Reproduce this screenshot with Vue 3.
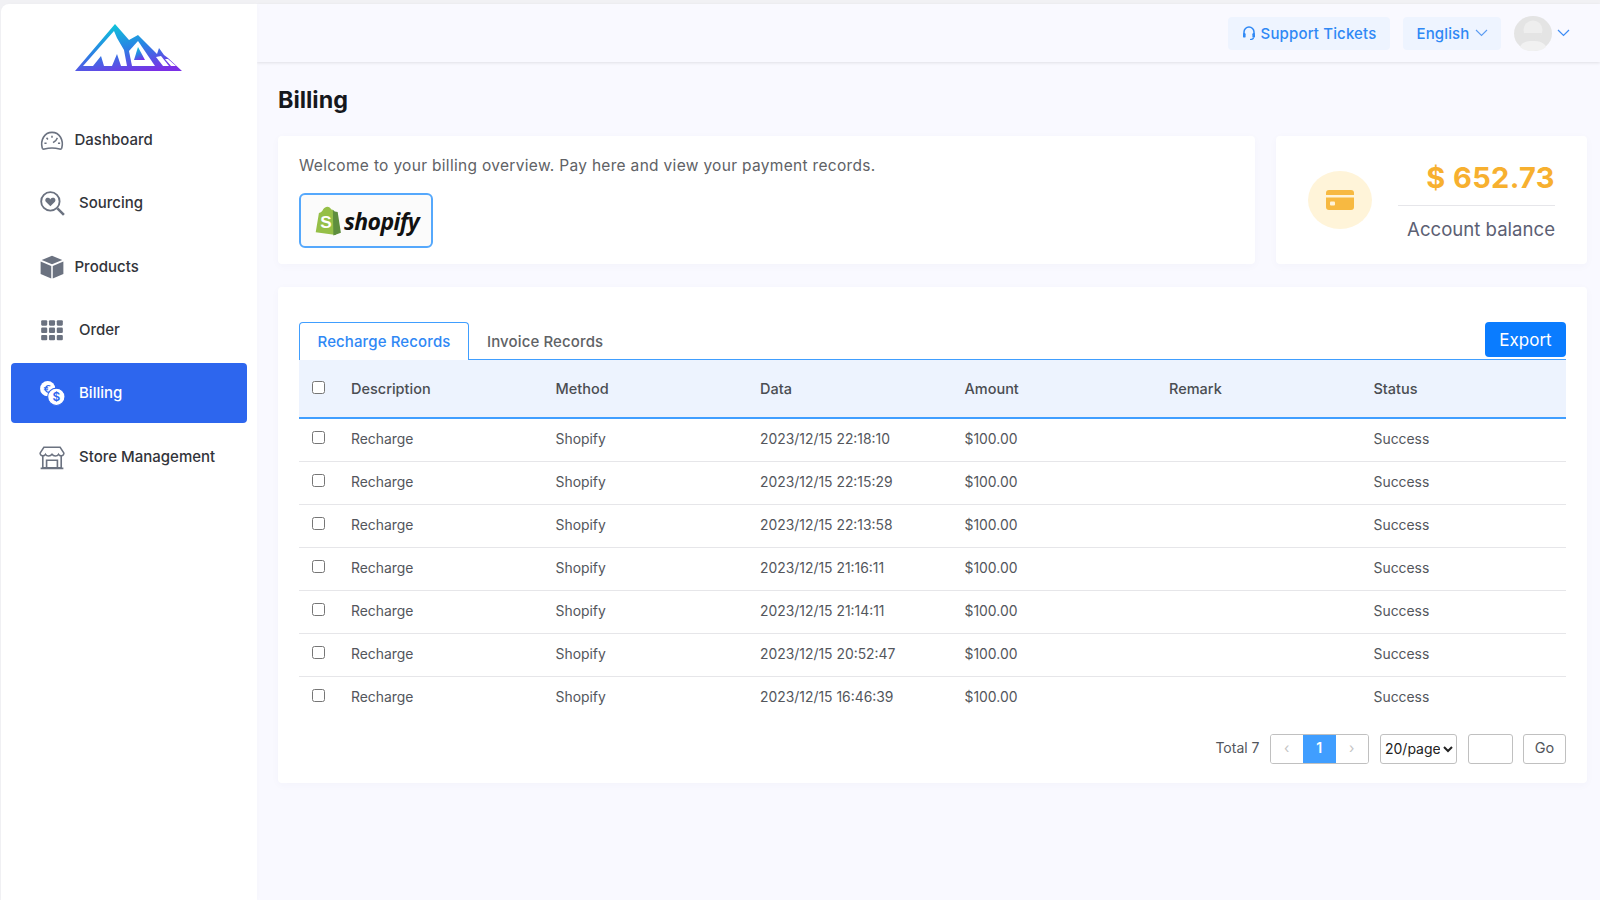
<template>
  <div class="page">
    <aside class="sidebar">
      <div class="logo">
        <svg width="108" height="50" viewBox="0 0 108 50">
          <defs>
            <linearGradient id="lg" x1="0.3" y1="0" x2="0.7" y2="1">
              <stop offset="0" stop-color="#0cc8d8" />
              <stop offset="0.5" stop-color="#2a82e4" />
              <stop offset="1" stop-color="#7a2fe6" />
            </linearGradient>
          </defs>
          <path fill="url(#lg)" d="M40 0 L54 16 L63 11 L82 30 L84 24 L89 31 L93 34 L107 47 L0 47 Z" />
          <path fill="#fff" d="M39 7 L8 42 L18 42 L26 32 L29 42 L37 42 L42 30 L46 42 L52 42 L49 26 L42 14 Z" />
          <path fill="#fff" d="M63 17 L54 27 L57 42 L80 42 Z" />
          <path fill="url(#lg)" d="M63 23 L70 36 L59 36 Z" />
          <path fill="#fff" d="M81 33 L86 32 L94 42 L88 42 Z" />
          <path fill="#fff" d="M90 35 L93 35 L101 42 L96 42 Z" />
        </svg>
      </div>
      <nav class="nav">
        <a v-for="item in menu" :key="item.name" class="nav-item" :class="{ active: item.name === 'Billing', tight: item.tight }">
          <svg class="nav-icon" viewBox="0 0 24 24" v-html="item.icon"></svg>
          <span>{{ item.name }}</span>
        </a>
      </nav>
    </aside>

    <div class="right">
      <header class="topbar">
        <button class="top-btn support">
          <svg width="14" height="15" viewBox="0 0 14 15" fill="none">
            <path d="M2 8V6a5 5 0 0 1 10 0v2" stroke="#2f88f5" stroke-width="1.5" />
            <rect x="1" y="7" width="2.6" height="4.6" rx="1.2" fill="#2f88f5" />
            <rect x="10.4" y="7" width="2.6" height="4.6" rx="1.2" fill="#2f88f5" />
            <path d="M11.5 11.5c0 1.5-1.5 2-3.5 2" stroke="#2f88f5" stroke-width="1.2" />
          </svg>
          Support Tickets
        </button>
        <button class="top-btn lang">
          English
          <svg width="13" height="8" viewBox="0 0 13 8" fill="none"><path d="M1 1l5.5 5.5L12 1" stroke="#5b9cf2" stroke-width="1.1" /></svg>
        </button>
        <div class="avatar">
          <svg width="38" height="35" viewBox="0 0 38 35">
            <ellipse cx="19" cy="17.5" rx="19" ry="17.5" fill="#e4e4e4" />
            <circle cx="19" cy="14" r="9.5" fill="#eeeeee" />
            <path d="M10 17h18c-1 5-5 7-9 7s-8-2-9-7z" fill="#e4e4e4" />
            <path d="M6 31c2-5 7-6 13-6s11 1 13 6c-3 3-8 4-13 4s-10-1-13-4z" fill="#f1f1f1" />
          </svg>
        </div>
        <svg class="avatar-caret" width="13" height="8" viewBox="0 0 13 8" fill="none"><path d="M1 1l5.5 5.5L12 1" stroke="#3d8cf5" stroke-width="1.2" /></svg>
      </header>

      <main class="main">
        <h1 class="title">Billing</h1>

        <div class="summary">
          <section class="card welcome">
            <p>Welcome to your billing overview. Pay here and view your payment records.</p>
            <button class="shopify-btn">
              <svg width="29" height="30" viewBox="0 0 26 28">
                <path d="M2 24.5 L5 6.5 C7 6 8 5 9 3 C10.5 0.5 13.5 0 15 1.5 L17 3.5 L18 3.5 L21 27 Z" fill="#95bf47" />
                <path d="M18 3.5 L19.8 5.2 L22.5 5.5 L25.5 25 L18.5 27.5 Z" fill="#5e8e3e" />
                <text x="11.5" y="20.5" text-anchor="middle" class="bag-s">S</text>
              </svg>
              <span class="shopify-word">shopify</span>
            </button>
          </section>
          <section class="card balance">
            <div class="balance-icon">
              <svg width="28" height="20" viewBox="0 0 28 20">
                <path d="M3 0h22a3 3 0 0 1 3 3v2H0V3a3 3 0 0 1 3-3z" fill="#f7b941" />
                <path d="M0 7.5h28V17a3 3 0 0 1-3 3H3a3 3 0 0 1-3-3z" fill="#f7b941" />
                <rect x="4" y="11.5" width="5" height="4" rx="1" fill="#fff3d9" />
              </svg>
            </div>
            <div class="balance-text">
              <div class="amount">$ 652.73</div>
              <div class="balance-label">Account balance</div>
            </div>
          </section>
        </div>

        <section class="card records">
          <div class="tabs">
            <button class="tab active">Recharge Records</button>
            <button class="tab">Invoice Records</button>
            <button class="export">Export</button>
          </div>

          <table class="table">
            <thead>
              <tr>
                <th class="check"><input type="checkbox" /></th>
                <th v-for="c in columns" :key="c">{{ c }}</th>
              </tr>
            </thead>
            <tbody>
              <tr v-for="r in rows" :key="r">
                <td class="check"><input type="checkbox" /></td>
                <td>Recharge</td>
                <td>Shopify</td>
                <td>{{ r }}</td>
                <td>$100.00</td>
                <td></td>
                <td>Success</td>
              </tr>
            </tbody>
          </table>

          <div class="pager">
            <span class="total">Total 7</span>
            <div class="pages">
              <button class="page-btn">‹</button>
              <button class="page-btn current">1</button>
              <button class="page-btn">›</button>
            </div>
            <select class="size">
              <option>20/page</option>
            </select>
            <input class="jump" type="text" />
            <button class="go">Go</button>
          </div>
        </section>
      </main>
    </div>
  </div>
</template>

<script setup>
const menu = [
  {
    name: 'Dashboard',
    tight: true,
    icon: '<path d="M3 19.5C1 12 5 5 12 5s11 7 9 14.5c-.3 1-1 1-2 .8-4-1-10-1-14 0-1 .2-1.7.2-2-.8z" fill="none" stroke="#6b7280" stroke-width="1.5"/><path d="M12 8v2M7 10l1.2 1.5M17 10l-1.5 2.5-2.5 2M5 15h2M17.5 15h2" stroke="#6b7280" stroke-width="1.4" fill="none"/>'
  },
  {
    name: 'Sourcing',
    icon: '<circle cx="10.5" cy="10.5" r="8.5" fill="none" stroke="#6b7280" stroke-width="1.7"/><path d="M17 17l6 6" stroke="#6b7280" stroke-width="2.4"/><path d="M10.5 15L6.3 10.8C5 9 6.5 6.8 8.5 7.2c1 .2 1.6.8 2 1.5.4-.7 1-1.3 2-1.5 2-.4 3.5 1.8 2.2 3.6z" fill="#6b7280"/>'
  },
  {
    name: 'Products',
    tight: true,
    icon: '<path d="M12 1.5L2.5 5.5l9.5 4 9.5-4z" fill="#6b7280"/><path d="M1.5 7l9.8 4v11.5L1.5 18.5z" fill="#6b7280"/><path d="M22.5 7l-9.8 4v11.5l9.8-4z" fill="#6b7280"/>'
  },
  {
    name: 'Order',
    icon: '<g fill="#6b7280"><rect x="2" y="3" width="5.6" height="5" rx="1"/><rect x="9.2" y="3" width="5.6" height="5" rx="1"/><rect x="16.4" y="3" width="5.6" height="5" rx="1"/><rect x="2" y="9.8" width="5.6" height="5" rx="1"/><rect x="9.2" y="9.8" width="5.6" height="5" rx="1"/><rect x="16.4" y="9.8" width="5.6" height="5" rx="1"/><rect x="2" y="16.5" width="5.6" height="5" rx="1"/><rect x="9.2" y="16.5" width="5.6" height="5" rx="1"/><rect x="16.4" y="16.5" width="5.6" height="5" rx="1"/></g>'
  },
  {
    name: 'Billing',
    icon: '<circle cx="8" cy="8" r="7" fill="#fff"/><path d="M10.5 5.5C8.5 4.5 6.3 5.5 6 8s2 4 4.5 2.8M4.5 7.2h4M4.5 9h4" stroke="#2d66ee" stroke-width="1.1" fill="none"/><circle cx="16" cy="15.5" r="8" fill="#fff" stroke="#2d66ee" stroke-width="1"/><text x="16" y="19.5" text-anchor="middle" font-size="11" font-family="Inter" font-weight="600" fill="#2d66ee">$</text>'
  },
  {
    name: 'Store Management',
    icon: '<path d="M3.5 10.5V22h17V10.5" fill="none" stroke="#6b7280" stroke-width="1.5"/><path d="M4.5 3h15l3.5 5.5c-.3 3-3.8 3-5 1-1.2 2-4.5 2-6 0-1.5 2-4.8 2-6 0-1.2 2-4.7 2-5-1z" fill="none" stroke="#6b7280" stroke-width="1.4"/><path d="M7 22v-7h10v7M1.5 22.5h21" fill="none" stroke="#6b7280" stroke-width="1.5"/>'
  }
]

const columns = ['Description', 'Method', 'Data', 'Amount', 'Remark', 'Status']

const rows = [
  '2023/12/15 22:18:10',
  '2023/12/15 22:15:29',
  '2023/12/15 22:13:58',
  '2023/12/15 21:16:11',
  '2023/12/15 21:14:11',
  '2023/12/15 20:52:47',
  '2023/12/15 16:46:39'
]
</script>

<style>
body {
  background: #f1f1f4;
}
</style>

<style scoped>
.page {
  --blue: #409eff;
  display: flex;
  height: 900px;
  padding-top: 4px;
  padding-left: 1px;
  box-sizing: border-box;
  overflow: hidden;
  font-family: Inter, "Liberation Sans", sans-serif;
  color: #303133;
}

.sidebar {
  width: 256px;
  flex: none;
  background: #fff;
  border-top-left-radius: 8px;
  box-shadow: 1px 0 4px rgba(0, 0, 0, 0.02);
  z-index: 2;
}
.logo {
  height: 71px;
  display: flex;
  justify-content: center;
  padding-top: 20px;
  box-sizing: border-box;
}
.nav {
  display: flex;
  flex-direction: column;
  gap: 3.33px;
  padding: 35px 10px 0;
}
.nav-item {
  height: 60px;
  display: flex;
  align-items: center;
  gap: 14px;
  padding-left: 28px;
  border-radius: 4px;
  font-size: 15px;
  line-height: 18px;
  font-weight: 500;
  color: #32343a;
}
.nav-item.tight {
  gap: 9.5px;
}
.nav-item.active {
  background: #2d66ee;
  color: #fff;
}
.nav-icon {
  width: 26px;
  height: 26px;
  flex: none;
}

.right {
  flex: 1;
  min-width: 0;
  background: #f9f9ff;
  display: flex;
  flex-direction: column;
}
.topbar {
  height: 58px;
  flex: none;
  display: flex;
  align-items: center;
  justify-content: flex-end;
  padding-right: 30px;
  background: #f9f9ff;
  box-shadow: 0 1px 3px rgba(0, 0, 0, 0.1);
}
.top-btn {
  height: 33px;
  border: none;
  border-radius: 4px;
  background: #eef4ff;
  color: #2f88f5;
  font-family: inherit;
  font-size: 15px;
  font-weight: 500;
  letter-spacing: 0.15px;
  display: flex;
  align-items: center;
  justify-content: center;
  gap: 5px;
}
.support {
  width: 162px;
  margin-right: 13px;
}
.lang {
  width: 98px;
  margin-right: 13px;
}
.avatar {
  width: 38px;
  height: 35px;
  margin-right: 5px;
}

.main {
  padding: 0 13px 0 21px;
}
.title {
  margin: 0;
  padding-top: 24px;
  height: 50px;
  font-size: 23.3px;
  line-height: 28px;
  font-weight: 700;
  color: #16181d;
}
.card {
  background: #fff;
  border-radius: 4px;
  box-shadow: 0 2px 8px rgba(60, 60, 120, 0.03);
}
.summary {
  display: flex;
  gap: 21px;
  height: 128px;
}
.welcome {
  flex: 1;
  padding: 20px 21px;
  box-sizing: border-box;
}
.welcome p {
  margin: 0;
  font-size: 15.5px;
  line-height: 19px;
  letter-spacing: 0.31px;
  color: #606266;
}
.shopify-btn {
  margin-top: 18px;
  width: 134px;
  height: 55px;
  border: 2px solid #55a8fc;
  border-radius: 6px;
  background: #fbfbfb;
  display: flex;
  align-items: center;
  justify-content: center;
  gap: 2px;
  padding: 0;
}
.bag-s {
  font-family: "Liberation Sans", sans-serif;
  font-weight: 700;
  font-size: 16px;
  fill: #fff;
}
.shopify-word {
  font-family: "Open Sans", sans-serif;
  font-style: italic;
  font-weight: 700;
  font-size: 23px;
  letter-spacing: -0.6px;
  color: #111;
}
.balance {
  width: 311px;
  flex: none;
  display: flex;
  align-items: center;
  padding: 0 32px;
  box-sizing: border-box;
  justify-content: space-between;
}
.balance-icon {
  width: 64px;
  height: 58px;
  border-radius: 50%;
  background: #fff4d9;
  display: flex;
  align-items: center;
  justify-content: center;
}
.balance-text {
  width: 157px;
  padding-top: 1px;
  text-align: right;
}
.amount {
  font-size: 29px;
  line-height: 34px;
  font-weight: 700;
  letter-spacing: 0.4px;
  color: #f7b02f;
  padding-bottom: 10px;
  border-bottom: 1px solid #e6e6ea;
}
.balance-label {
  margin-top: 12px;
  font-size: 18.6px;
  line-height: 22px;
  font-weight: 400;
  color: #5c6073;
}

.records {
  margin-top: 23px;
  height: 496px;
  padding: 35px 21px 0;
  box-sizing: border-box;
}
.tabs {
  display: flex;
  align-items: flex-end;
  height: 37px;
  border-bottom: 1px solid var(--blue);
  position: relative;
}
.tab {
  height: 37px;
  padding: 2px 18px 0;
  border: none;
  background: none;
  font-family: inherit;
  font-size: 15px;
  font-weight: 500;
  letter-spacing: 0.12px;
  color: #606266;
}
.tab.active {
  width: 170px;
  height: 38px;
  margin-bottom: -1px;
  padding: 0;
  background: #fff;
  color: #2f88f5;
  border: 1px solid var(--blue);
  border-bottom: none;
  border-radius: 4px 4px 0 0;
  box-sizing: border-box;
}
.export {
  margin-left: auto;
  align-self: flex-start;
  width: 81px;
  height: 35px;
  border: none;
  border-radius: 4px;
  padding: 1px 0 0;
  background: #0a7cff;
  color: #fff;
  font-family: inherit;
  font-size: 17px;
  font-weight: 400;
}

.table {
  width: 100%;
  border-collapse: collapse;
  table-layout: fixed;
  font-size: 13.9px;
  color: #53565c;
}
.table th {
  width: 204.5px;
  height: 57px;
  background: #edf3fe;
  border-bottom: 2px solid #409eff;
  text-align: left;
  font-weight: 500;
  font-size: 14.5px;
  color: #4a4d52;
  padding: 0;
}
.table th:last-child {
  width: auto;
}
.table td {
  height: 43px;
  padding: 0 0 2px;
  box-sizing: border-box;
  border-bottom: 1px solid #e6e6e9;
}
.table tbody tr:last-child td {
  border-bottom: none;
}
.table th.check,
.table td.check {
  width: 52px;
  padding-left: 13px;
  box-sizing: border-box;
}
.check input {
  display: block;
  width: 13px;
  height: 13px;
  margin: 0 0 3px;
}

.pager {
  display: flex;
  align-items: center;
  justify-content: flex-end;
  margin-top: 15px;
  font-size: 14px;
}
.total {
  color: #53565c;
  margin-right: 10px;
  padding-bottom: 3px;
}
.pages {
  display: flex;
  height: 30px;
  border: 1px solid #c0c0c0;
  border-radius: 3px;
  box-sizing: border-box;
  overflow: hidden;
  margin-right: 11px;
}
.page-btn {
  width: 32.5px;
  border: none;
  background: #fff;
  padding: 0 0 3px;
  color: #c4c4c4;
  font-family: inherit;
  font-size: 14px;
}
.page-btn.current {
  background: var(--blue);
  color: #fff;
  font-weight: 600;
}
.size {
  width: 77px;
  height: 30px;
  margin-right: 11px;
  border: 1px solid #c0c0c0;
  border-radius: 3px;
  background: #fff;
  font-family: inherit;
  font-size: 14px;
  color: #222;
  padding: 0 0 2px;
}
.jump {
  width: 45px;
  height: 30px;
  margin-right: 10px;
  border: 1px solid #c0c0c0;
  border-radius: 3px;
  box-sizing: border-box;
  padding: 0;
}
.go {
  width: 43px;
  height: 30px;
  border: 1px solid #c0c0c0;
  border-radius: 3px;
  background: #fff;
  font-family: inherit;
  font-size: 14.5px;
  color: #53565c;
  padding: 0 0 3px;
}
</style>
